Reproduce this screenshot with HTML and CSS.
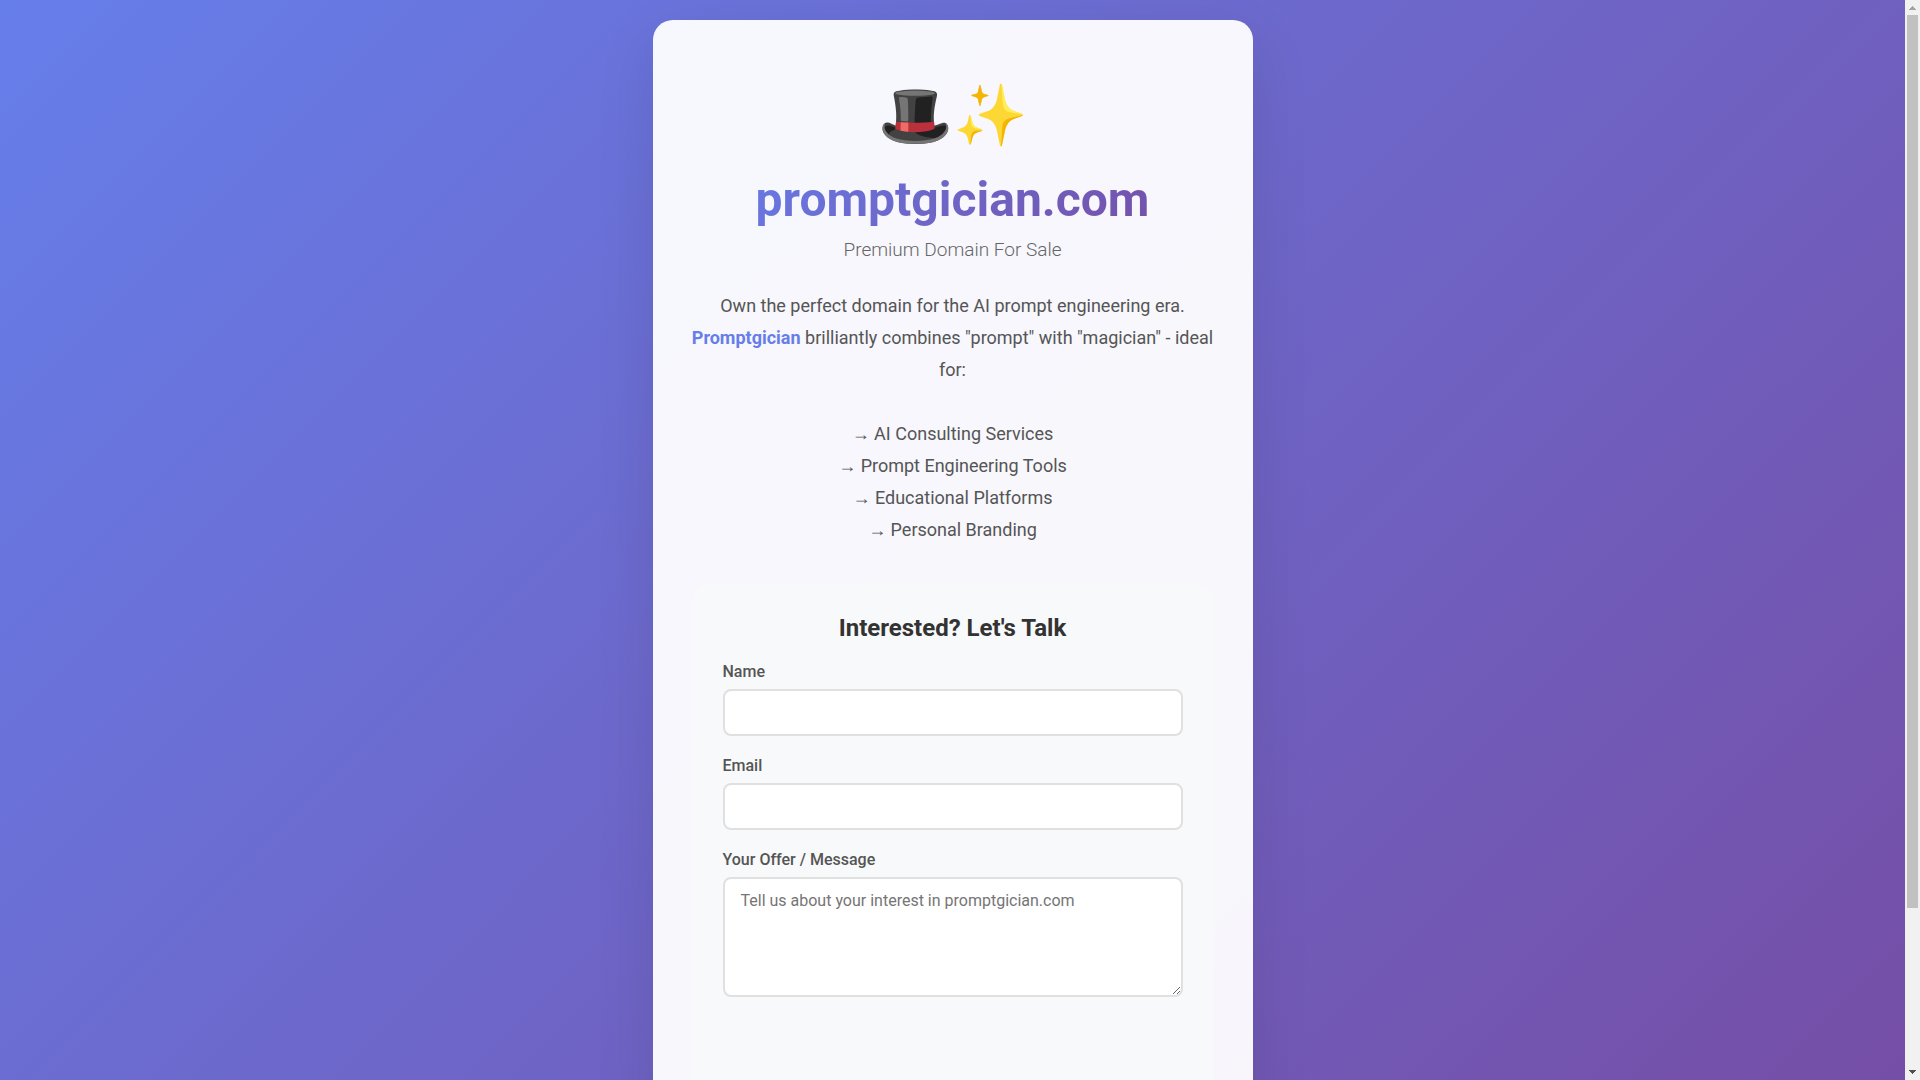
FILE: index.html
```html
<!DOCTYPE html>
<html lang="en">
<head>
<meta charset="UTF-8">
<meta name="viewport" content="width=device-width, initial-scale=1.0">
<title>promptgician.com - Premium Domain For Sale</title>
<link rel="stylesheet" href="styles.css">
</head>
<body>
<main class="container">
  <div class="logo">🎩✨</div>
  <h1>promptgician.com</h1>
  <p class="tagline">Premium Domain For Sale</p>
  <p class="description">
    Own the perfect domain for the AI prompt engineering era. <span class="highlight">Promptgician</span> brilliantly combines "prompt" with "magician" - ideal for:<br><br>
    → AI Consulting Services<br>
    → Prompt Engineering Tools<br>
    → Educational Platforms<br>
    → Personal Branding
  </p>
  <form class="contact-form">
    <h2>Interested? Let's Talk</h2>
    <div class="form-group">
      <label for="name">Name</label>
      <input type="text" id="name" name="name">
    </div>
    <div class="form-group">
      <label for="email">Email</label>
      <input type="email" id="email" name="email">
    </div>
    <div class="form-group">
      <label for="message">Your Offer / Message</label>
      <textarea id="message" name="message" placeholder="Tell us about your interest in promptgician.com"></textarea>
    </div>
  </form>
</main>
<div class="scrollbar" aria-hidden="true">
  <svg class="scroll-arrow" viewBox="0 0 15 15"><path d="M7 6h1v1h1v1h1v1h1v1H4V9h1V8h1V7h1z" fill="#a3a3a3"/></svg>
  <div class="track"><div class="thumb"></div></div>
  <svg class="scroll-arrow" viewBox="0 0 15 15"><path d="M4 5h7v1h-1v1H9v1H8v1H7V8H6V7H5V6H4z" fill="#505050"/></svg>
</div>
</body>
</html>
```
FILE: styles.css
```css
* {
  margin: 0;
  padding: 0;
  box-sizing: border-box;
}

body {
  display: flex;
  justify-content: center;
  align-items: center;
  min-height: 100vh;
  padding: 20px 35px 20px 20px;
  font-family: Roboto, "Liberation Sans", sans-serif;
  color: #333;
  background: linear-gradient(135deg, #667eea 0%, #764ba2 100%);
}

.container {
  width: 100%;
  max-width: 600px;
  padding: 60px 40px;
  border-radius: 20px;
  background: rgba(255, 255, 255, 0.95);
  box-shadow: 0 20px 60px rgba(0, 0, 0, 0.1);
  text-align: center;
}

.logo {
  margin-bottom: 20px;
  font-size: 60px;
  line-height: 72px;
}

h1 {
  margin-bottom: 10px;
  font-size: 48px;
  line-height: 56px;
  background: linear-gradient(135deg, #667eea 0%, #764ba2 100%);
  background-clip: text;
  -webkit-background-clip: text;
  -webkit-text-fill-color: transparent;
}

.tagline {
  margin-bottom: 28px;
  font-size: 19px;
  font-weight: 300;
  line-height: 24px;
  color: #666;
}

.description {
  margin: 0 -4px 38px;
  font-size: 18px;
  line-height: 32px;
  color: #555;
}

.highlight {
  font-weight: 700;
  color: #667eea;
}

.contact-form {
  min-height: 604px;
  padding: 30px;
  border-radius: 15px;
  background: #f8f9fa;
}

.contact-form h2 {
  margin-bottom: 20px;
  font-size: 24px;
  line-height: 28px;
}

.form-group {
  margin-bottom: 20px;
  text-align: left;
}

.form-group label {
  display: block;
  margin-bottom: 8px;
  font-size: 16px;
  font-weight: 500;
  line-height: 19px;
  color: #555;
}

.form-group input,
.form-group textarea {
  display: block;
  width: 100%;
  padding: 12px 16px;
  border: 2px solid #e0e0e0;
  border-radius: 8px;
  background: #fff;
  font-family: inherit;
  font-size: 16px;
  line-height: 19px;
}

.form-group textarea {
  min-height: 120px;
  resize: vertical;
}

.scrollbar {
  position: fixed;
  top: 0;
  right: 0;
  bottom: 0;
  display: flex;
  flex-direction: column;
  width: 15px;
  background: #f1f1f1;
}

.scroll-arrow {
  width: 15px;
  height: 15px;
}

.track {
  flex: 1;
  padding: 0 2px;
}

.thumb {
  height: 85%;
  background: #c1c1c1;
}
```
